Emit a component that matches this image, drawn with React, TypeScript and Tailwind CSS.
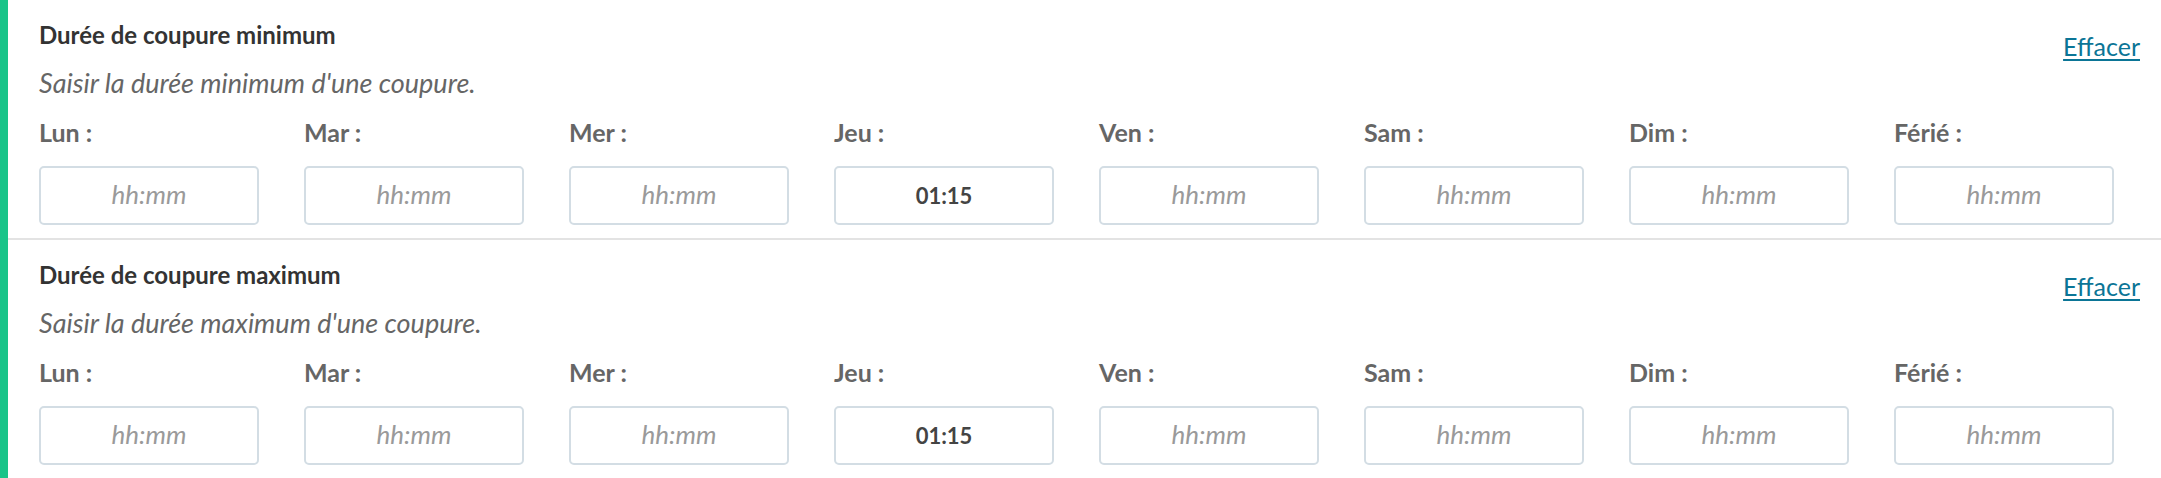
import React from 'react';

const days = ['Lun', 'Mar', 'Mer', 'Jeu', 'Ven', 'Sam', 'Dim', 'Férié'];

const sections = [
  {
    title: 'Durée de coupure minimum',
    hint: "Saisir la durée minimum d'une coupure.",
    values: { Jeu: '01:15' } as Record<string, string>,
  },
  {
    title: 'Durée de coupure maximum',
    hint: "Saisir la durée maximum d'une coupure.",
    values: { Jeu: '01:15' } as Record<string, string>,
  },
];

const App = () => {
  return (
    <div
      className="w-[2161px] h-[478px] overflow-hidden bg-white border-l-8 border-[#19c489]"
      style={{ fontFamily: 'Lato, "Open Sans", sans-serif' }}
    >
      {sections.map((section, index) => (
        <section
          key={index}
          className={
            index === 0
              ? 'h-[240px] pl-[31px] pr-[21px] pt-[20px] border-b-2 border-[#e3e3e3]'
              : 'h-[240px] pl-[31px] pr-[21px] pt-[20px]'
          }
        >
          <div className="flex items-start justify-between">
            <div>
              <h3 className="text-[24px] leading-[30px] font-bold text-[#333333]">{section.title}</h3>
              <p className="mt-[17px] text-[27px] leading-[32px] italic text-[#666666]">{section.hint}</p>
            </div>
            <a href="#" className="mt-[11px] text-[25px] leading-[30px] text-[#0b7596] underline underline-offset-[3px]">
              Effacer
            </a>
          </div>

          <div className="mt-[18px] grid grid-cols-[repeat(8,220px)] gap-x-[45px]">
            {days.map((day) => {
              const value = section.values[day] ?? '';
              return (
                <div key={day} className="flex flex-col">
                  <label className="text-[25px] leading-[30px] font-bold text-[#666666]">{day} :</label>
                  <input
                    type="text"
                    readOnly
                    value={value}
                    placeholder="hh:mm"
                    className="mt-[19px] h-[59px] w-[220px] rounded-[5px] border-2 border-[#d3dde4] bg-white text-center text-[22px] font-bold text-[#444444] outline-none placeholder:text-[26px] placeholder:font-normal placeholder:italic placeholder:text-[#9a9a9a]"
                  />
                </div>
              );
            })}
          </div>
        </section>
      ))}
    </div>
  );
};

export default App;
